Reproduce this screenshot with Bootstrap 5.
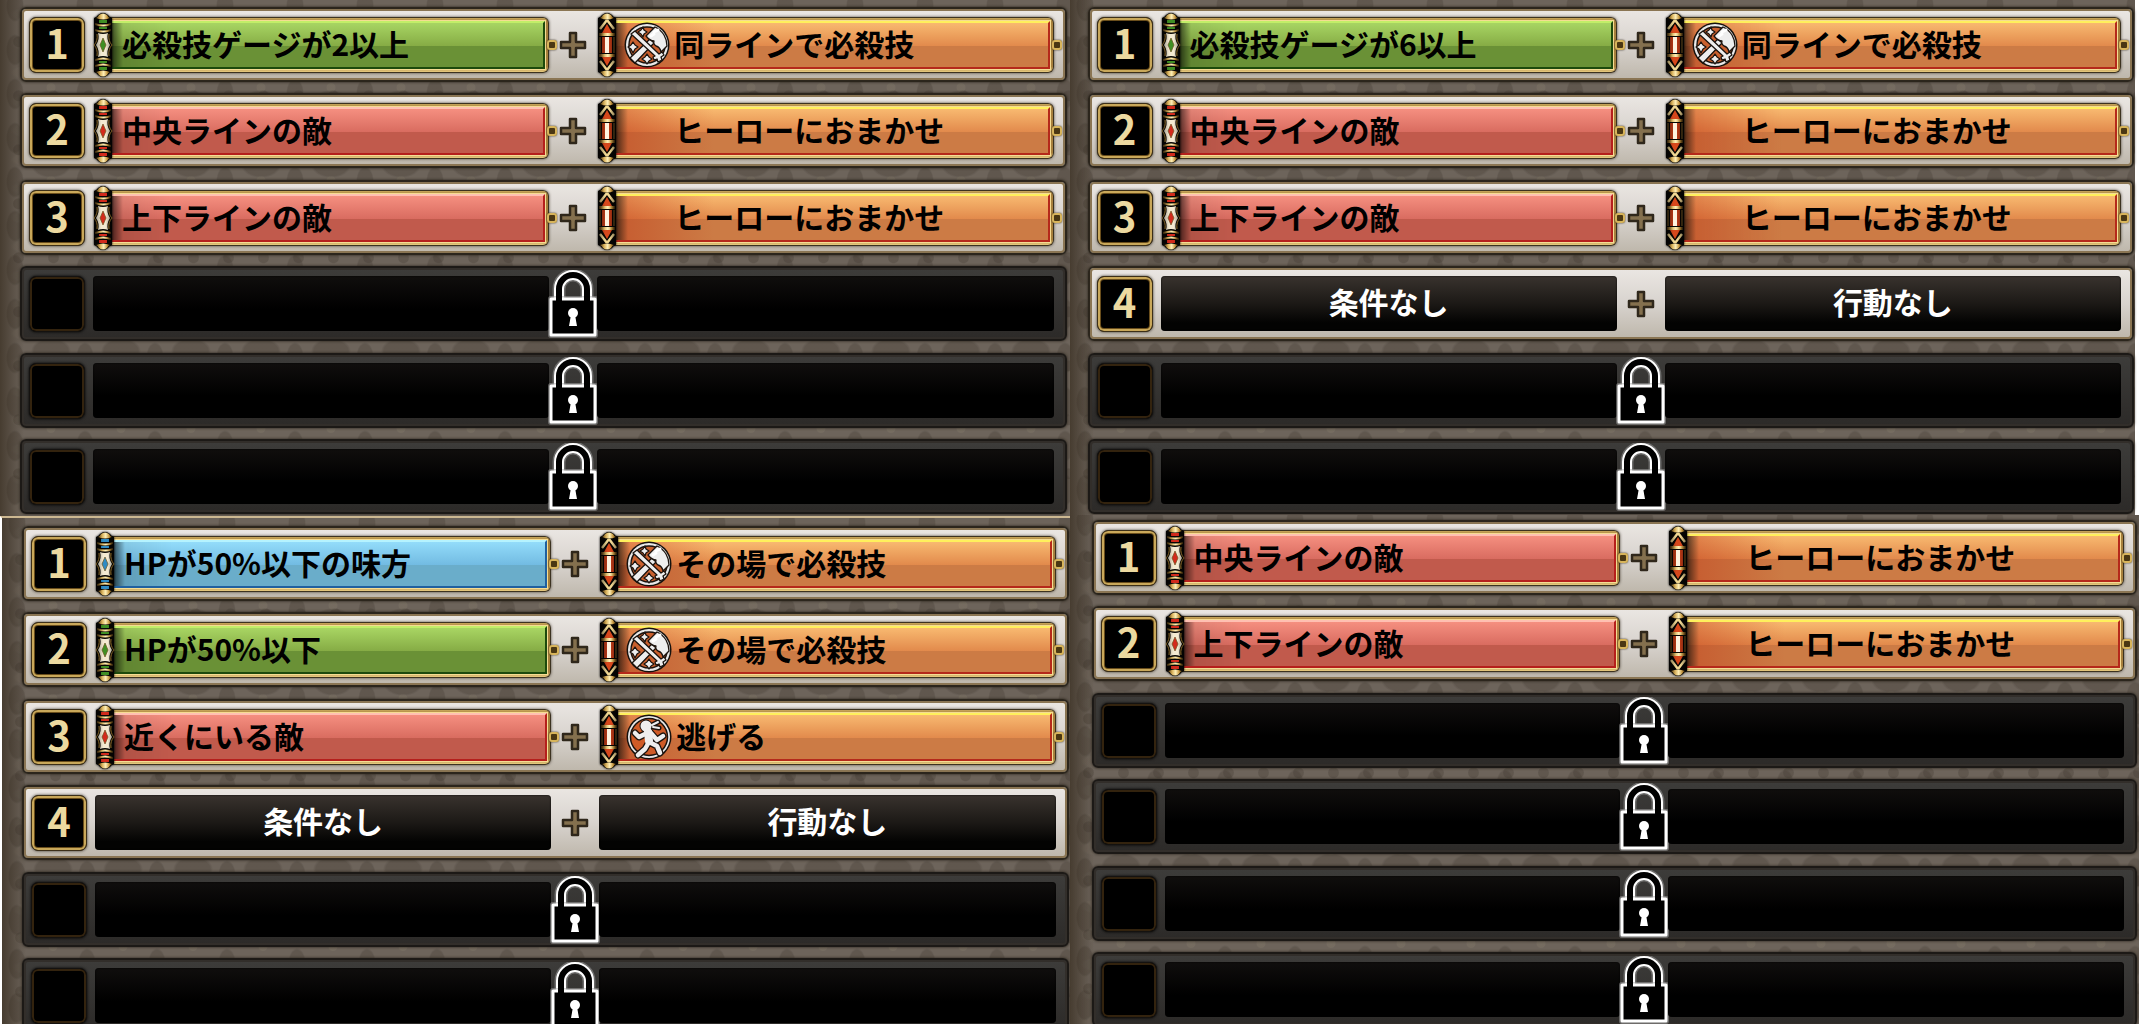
<!DOCTYPE html>
<html lang="ja">
<head>
<meta charset="utf-8">
<meta name="viewport" content="width=device-width, initial-scale=1">
<title>作戦リスト</title>
<link href="https://cdn.jsdelivr.net/npm/bootstrap@5.3.0/dist/css/bootstrap.min.css" rel="stylesheet">
<style>
body{background:#5c554b;font-family:"Noto Sans CJK JP","Noto Sans",sans-serif}
.plan{
  --tone:rgba(58,50,42,.26);
  background-color:#6d645b;
  background-image:
    linear-gradient(90deg,rgba(45,34,20,.6),rgba(45,34,20,0) 24px),
    radial-gradient(ellipse 20px 13px at 50% 50%,var(--tone) 85%,transparent),
    radial-gradient(ellipse 9px 16px at 50% 50%,var(--tone) 85%,transparent),
    radial-gradient(circle 5px at 50% 50%,rgba(140,130,112,.25) 80%,transparent),
    radial-gradient(circle 6px at 30% 70%,var(--tone) 80%,transparent),
    radial-gradient(ellipse 16px 7px at 50% 50%,rgba(128,118,106,.25) 80%,transparent);
  background-size:100% 100%,70px 62px,70px 44px,70px 31px,35px 54px,53px 29px;
  background-position:0 0,16px 10px,50px 28px,16px 10px,8px 4px,0 0;
}
.plan-a{padding:7px 3px 2px 20px}
.plan-b{padding:7px 1px 1px 18px;border-right:4px solid #fff}
.plan-c{padding:8px 1px 0 20px;border-left:2px solid #fff;border-top:2px solid #cdb891}
.plan-d{padding:5px 2px 0 22px}
.rule{height:75px;margin-bottom:11px;padding:0 11px 0 7px;border:2px solid #2b251c;border-radius:6px;
  background:linear-gradient(#ebe7e3,#d8d3ce 50%,#bdb6aa);box-shadow:inset 0 0 0 2px #8a7553,0 0 3px #241e16}
.rule:nth-child(2n){margin-bottom:12px}
.rule.shut{background:linear-gradient(#3d3c3a,#2c2a28);border-color:#1c1916;box-shadow:inset 0 0 0 2px #322e2a,0 0 3px #241e16}
.digit{width:56px;height:56px;margin-right:8px;border:1px solid #3c2f18;border-radius:7px;background:#000;color:#ecd9a0;
  box-shadow:inset 0 0 0 2px #c9a85a,inset 0 0 0 3px #6a4e1c,0 0 3px #3b362e;font-size:40px;line-height:48px;font-weight:700}
.shut .digit{border-color:#141210;box-shadow:inset 0 0 0 2px #33230e,0 0 3px #000}
.slot{flex:1 1 0;min-width:0;padding:0;border:0;background:none;font-size:30px;line-height:44px;font-weight:700;color:#000;white-space:nowrap}
.hollow{height:55px;padding-bottom:5px;border-radius:4px;background:linear-gradient(#39332e,#1c1916 50%,#030302 85%);color:#fff;box-shadow:inset 0 0 2px #000}
.shut .hollow{background:linear-gradient(#100e0d,#000 60%)}
.joint{width:48px}
.joint svg{flex:none}
.roll{width:20px;height:66px;flex:none;position:relative;z-index:1;filter:drop-shadow(0 0 1px #000)}
.bar{height:56px;margin-left:-3px;padding-left:12px;border:1px solid #3c3220;border-left:0;border-radius:0 6px 6px 0;
  background:linear-gradient(#c9a85c,#a7803c 6%,#a7803c 90%,#e9cc80);box-shadow:0 0 3px #4a4238;padding:3px 3px 3px 0}
.fill{height:48px;border:2px solid var(--edge);border-left:0;border-top-color:var(--shine);padding:0 0 4px 12px;
  background:linear-gradient(90deg,rgba(0,0,0,.7),rgba(0,0,0,.08) 13px,rgba(0,0,0,0) 60px),
  linear-gradient(var(--hi),var(--mid) 52%,var(--low) 53%,var(--low));outline:1px solid #f5dc93}
.green{--shine:#c2ee68;--hi:#a8d563;--mid:#86ac45;--low:#6a9136;--edge:#1d4a0c;--gem:#3f8f24}
.red{--shine:#ffc0b2;--hi:#f58f80;--mid:#d96c60;--low:#c15a4c;--edge:#b51f1c;--gem:#d32a1c}
.blue{--shine:#b5f3ff;--hi:#93dcfa;--mid:#72bbe2;--low:#6aadca;--edge:#20609f;--gem:#2f8bc4}
.orange{--shine:#fff05c;--hi:#f8b970;--mid:#e28a4c;--low:#cc7b45;--edge:#b5291a;--gem:#d6481c}
.orange .fill{background:linear-gradient(90deg,rgba(0,0,0,.75),rgba(190,50,20,.38) 14px,rgba(210,70,30,0) 100px),
  linear-gradient(var(--hi),var(--mid) 52%,var(--low) 53%,var(--low))}
.mark-box{width:46px;height:46px;flex:none;margin:4px 4px 0 -2px}
.ring{right:-8px;top:28px;width:10px;height:10px;border:2px solid #d7b45b;border-radius:3px;background:#4a3713;box-shadow:0 0 2px #2b2213}
</style>
<script src="https://cdn.jsdelivr.net/npm/bootstrap@5.3.0/dist/js/bootstrap.bundle.min.js"></script>
</head>
<body class="vh-100 overflow-hidden">

<svg width="0" height="0" class="position-absolute" aria-hidden="true">
  <defs>
    <linearGradient id="gold" x1="0" x2="1"><stop offset="0" stop-color="#4f350d"/><stop offset=".3" stop-color="#d9b25c"/><stop offset=".55" stop-color="#fff0b8"/><stop offset=".8" stop-color="#c3943c"/><stop offset="1" stop-color="#3c2708"/></linearGradient>
    <linearGradient id="shade" x1="0" x2="1"><stop offset="0" stop-opacity=".85"/><stop offset=".4" stop-opacity="0"/><stop offset=".65" stop-opacity="0"/><stop offset="1" stop-opacity=".85"/></linearGradient>
  </defs>
  <symbol id="rod" viewBox="0 0 20 66">
    <path d="M1 6Q4 5 5 3Q10-1 15 3Q16 5 19 6V60Q16 61 15 63Q10 67 5 63Q4 61 1 60Z" fill="#060503"/>
    <path d="M3 6Q5 5 6 3Q10 0 14 3Q15 5 17 6Q10 9 3 6ZM3 60Q5 61 6 63Q10 66 14 63Q15 61 17 60Q10 57 3 60Z" fill="url(#gold)"/>
    <path d="M6 8H14V11H6ZM6 15H14V17H6ZM6 49H14V51H6ZM6 55H14V58H6Z" fill="var(--gem)"/>
    <path d="M2 11Q10 14 18 11V13Q10 16 2 13ZM2 17Q10 20 18 17V19Q10 22 2 19ZM2 47Q10 44 18 47V49Q10 46 2 49ZM2 53Q10 50 18 53V55Q10 52 2 55Z" fill="url(#gold)"/>
    <path d="M5 21Q10 23 15 21Q13 27 17 33Q13 39 15 45Q10 43 5 45Q7 39 3 33Q7 27 5 21Z" fill="#f4ead2"/>
    <path d="M4 22Q5 29 1 33Q5 37 4 44M16 22Q15 29 19 33Q15 37 16 44" fill="none" stroke="#b98b35"/>
    <path d="M10 26L13 33L10 40L7 33Z" fill="var(--gem)" stroke="#6b5522" stroke-width=".7"/>
    <path d="M1 8H19V58H1Z" fill="url(#shade)" opacity=".5"/>
  </symbol>
  <symbol id="spear" viewBox="0 0 20 66">
    <path d="M1 6Q4 5 5 3Q10-1 15 3Q16 5 19 6V60Q16 61 15 63Q10 67 5 63Q4 61 1 60Z" fill="#060503"/>
    <path d="M3 6Q5 5 6 3Q10 0 14 3Q15 5 17 6Q10 9 3 6ZM3 60Q5 61 6 63Q10 66 14 63Q15 61 17 60Q10 57 3 60Z" fill="url(#gold)"/>
    <path d="M10 12L15 21H5ZM10 54L15 45H5Z" fill="#d6481c"/>
    <path d="M10 8L17 17M10 8L3 17M10 58L17 49M10 58L3 49" fill="none" stroke="#f1d893" stroke-width="2.5"/>
    <path d="M2 21H18V24H2ZM2 42H18V45H2Z" fill="url(#gold)"/>
    <path d="M5 25H15V41H5Z" fill="#b23715"/><path d="M8 25H12V41H8Z" fill="#fff3df"/>
    <path d="M3 25V41M17 25V41" stroke="#8f6b2a"/>
    <path d="M1 8H19V58H1Z" fill="url(#shade)" opacity=".6"/>
  </symbol>
  <symbol id="plus" viewBox="0 0 28 28">
    <path d="M11 2H17V11H26V17H17V26H11V17H2V11H11Z" fill="#84704e" stroke="#2f271b" stroke-width="2.5" stroke-linejoin="round"/>
  </symbol>
  <symbol id="lock" viewBox="0 0 50 68">
    <g fill="none" stroke-linejoin="round">
      <path d="M11 30V19a14 14 0 0 1 28 0V30" stroke="#aaa" stroke-opacity=".45" stroke-width="13"/>
      <path d="M11 30V19a14 14 0 0 1 28 0V30" stroke="#fff" stroke-width="10"/>
      <path d="M3 29H47V65H3Z" fill="#000" stroke="#aaa" stroke-opacity=".5" stroke-width="6"/>
      <path d="M3 29H47V65H3Z" fill="#000" stroke="#fff" stroke-width="3"/>
      <path d="M11 32V19a14 14 0 0 1 28 0V32" stroke="#000" stroke-width="6"/>
    </g>
    <circle cx="25" cy="43" r="5" fill="#fff"/><path d="M23 45H27L29 56H21Z" fill="#fff"/>
  </symbol>
  <symbol id="skill" viewBox="0 0 46 46">
    <circle cx="23" cy="23" r="22.5" fill="#17120e"/><circle cx="23" cy="23" r="21" fill="#e9e9e9"/><circle cx="23" cy="23" r="18" fill="#c9602e" stroke="#1b130e" stroke-width="1.5"/>
    <g fill="#eee" stroke="#1b130e" stroke-width="1.3" stroke-linejoin="round">
      <path d="M6 36L26 17L30 21L11 41Z"/>
      <path d="M7 12L11 9L35 32L38 30L40 33L37 35L38 38L34 40L33 37L30 38L29 35L31 34Z"/>
      <path d="M22 14L31 5Q36 7 40 13Q43 18 43 24L37 30Q36 25 32 24Q29 22 30 19Q26 19 22 14Z"/>
      <path d="M9 20L11 23L14 25L11 27L9 31L7 27L4 25L7 23Z"/>
      <path d="M19 5L20 8L23 10L20 12L19 15L17 12L14 10L17 8Z"/>
      <path d="M23 32L25 35L28 37L25 39L23 42L21 39L18 37L21 35Z"/>
    </g>
    <path d="M30 10L34 8M27 14L30 12" stroke="#fff" stroke-width="3" stroke-linecap="round"/>
  </symbol>
  <symbol id="flee" viewBox="0 0 46 46">
    <circle cx="23" cy="23" r="22.5" fill="#17120e"/><circle cx="23" cy="23" r="21" fill="#e9e9e9"/><circle cx="23" cy="23" r="18.5" fill="#cf5b27" stroke="#1b130e" stroke-width="1.5"/>
    <g fill="none" stroke-linecap="round" stroke-linejoin="round">
      <path d="M21 19L13 23L9 19M24 18L31 26L37 22M23 18L23 28L19 35L12 41M23 28L31 32L34 39" stroke="#1b130e" stroke-width="7"/>
      <circle cx="20" cy="12" r="6.5" fill="#1b130e"/>
      <path d="M21 19L13 23L9 19M24 18L31 26L37 22M23 28L19 35L12 41M23 28L31 32L34 39" stroke="#eee" stroke-width="4.5"/>
      <path d="M22 18L23 27" stroke="#eee" stroke-width="8"/>
      <path d="M26 11L32 8M27 13L33 14" stroke="#1b130e" stroke-width="5"/><path d="M26 11L32 8M27 13L33 14" stroke="#eee" stroke-width="2"/>
    </g>
    <circle cx="20" cy="12" r="5.5" fill="#eee"/>
  </symbol>
</svg>

<main class="row g-0">
  <div class="col-6 d-flex flex-column">
    <section class="plan plan-a"><ol class="list-unstyled m-0">
      <li class="rule d-flex align-items-center"><span class="digit text-center">1</span>
        <button type="button" class="slot green d-flex align-items-center position-relative"><svg class="roll"><use href="#rod"/></svg><span class="bar flex-grow-1"><span class="fill d-flex align-items-center">必殺技ゲージが2以上</span></span><i class="ring position-absolute"></i></button>
        <span class="joint d-flex justify-content-center"><svg width="28" height="28"><use href="#plus"/></svg></span>
        <button type="button" class="slot orange d-flex align-items-center position-relative"><svg class="roll"><use href="#spear"/></svg><span class="bar flex-grow-1"><span class="fill d-flex align-items-center"><svg class="mark-box"><use href="#skill"/></svg>同ラインで必殺技</span></span><i class="ring position-absolute"></i></button></li>
      <li class="rule d-flex align-items-center"><span class="digit text-center">2</span>
        <button type="button" class="slot red d-flex align-items-center position-relative"><svg class="roll"><use href="#rod"/></svg><span class="bar flex-grow-1"><span class="fill d-flex align-items-center">中央ラインの敵</span></span><i class="ring position-absolute"></i></button>
        <span class="joint d-flex justify-content-center"><svg width="28" height="28"><use href="#plus"/></svg></span>
        <button type="button" class="slot orange d-flex align-items-center position-relative"><svg class="roll"><use href="#spear"/></svg><span class="bar flex-grow-1"><span class="fill d-flex align-items-center"><span class="mark-box"></span>ヒーローにおまかせ</span></span><i class="ring position-absolute"></i></button></li>
      <li class="rule d-flex align-items-center"><span class="digit text-center">3</span>
        <button type="button" class="slot red d-flex align-items-center position-relative"><svg class="roll"><use href="#rod"/></svg><span class="bar flex-grow-1"><span class="fill d-flex align-items-center">上下ラインの敵</span></span><i class="ring position-absolute"></i></button>
        <span class="joint d-flex justify-content-center"><svg width="28" height="28"><use href="#plus"/></svg></span>
        <button type="button" class="slot orange d-flex align-items-center position-relative"><svg class="roll"><use href="#spear"/></svg><span class="bar flex-grow-1"><span class="fill d-flex align-items-center"><span class="mark-box"></span>ヒーローにおまかせ</span></span><i class="ring position-absolute"></i></button></li>
      <li class="rule shut d-flex align-items-center"><span class="digit"></span><span class="slot hollow"></span><span class="joint d-flex justify-content-center"><svg width="50" height="68"><use href="#lock"/></svg></span><span class="slot hollow"></span></li>
      <li class="rule shut d-flex align-items-center"><span class="digit"></span><span class="slot hollow"></span><span class="joint d-flex justify-content-center"><svg width="50" height="68"><use href="#lock"/></svg></span><span class="slot hollow"></span></li>
      <li class="rule shut d-flex align-items-center mb-0"><span class="digit"></span><span class="slot hollow"></span><span class="joint d-flex justify-content-center"><svg width="50" height="68"><use href="#lock"/></svg></span><span class="slot hollow"></span></li>
    </ol></section>

    <section class="plan plan-c"><ol class="list-unstyled m-0">
      <li class="rule d-flex align-items-center"><span class="digit text-center">1</span>
        <button type="button" class="slot blue d-flex align-items-center position-relative"><svg class="roll"><use href="#rod"/></svg><span class="bar flex-grow-1"><span class="fill d-flex align-items-center">HPが50%以下の味方</span></span><i class="ring position-absolute"></i></button>
        <span class="joint d-flex justify-content-center"><svg width="28" height="28"><use href="#plus"/></svg></span>
        <button type="button" class="slot orange d-flex align-items-center position-relative"><svg class="roll"><use href="#spear"/></svg><span class="bar flex-grow-1"><span class="fill d-flex align-items-center"><svg class="mark-box"><use href="#skill"/></svg>その場で必殺技</span></span><i class="ring position-absolute"></i></button></li>
      <li class="rule d-flex align-items-center"><span class="digit text-center">2</span>
        <button type="button" class="slot green d-flex align-items-center position-relative"><svg class="roll"><use href="#rod"/></svg><span class="bar flex-grow-1"><span class="fill d-flex align-items-center">HPが50%以下</span></span><i class="ring position-absolute"></i></button>
        <span class="joint d-flex justify-content-center"><svg width="28" height="28"><use href="#plus"/></svg></span>
        <button type="button" class="slot orange d-flex align-items-center position-relative"><svg class="roll"><use href="#spear"/></svg><span class="bar flex-grow-1"><span class="fill d-flex align-items-center"><svg class="mark-box"><use href="#skill"/></svg>その場で必殺技</span></span><i class="ring position-absolute"></i></button></li>
      <li class="rule d-flex align-items-center"><span class="digit text-center">3</span>
        <button type="button" class="slot red d-flex align-items-center position-relative"><svg class="roll"><use href="#rod"/></svg><span class="bar flex-grow-1"><span class="fill d-flex align-items-center">近くにいる敵</span></span><i class="ring position-absolute"></i></button>
        <span class="joint d-flex justify-content-center"><svg width="28" height="28"><use href="#plus"/></svg></span>
        <button type="button" class="slot orange d-flex align-items-center position-relative"><svg class="roll"><use href="#spear"/></svg><span class="bar flex-grow-1"><span class="fill d-flex align-items-center"><svg class="mark-box"><use href="#flee"/></svg>逃げる</span></span><i class="ring position-absolute"></i></button></li>
      <li class="rule d-flex align-items-center"><span class="digit text-center">4</span>
        <button type="button" class="slot hollow">条件なし</button>
        <span class="joint d-flex justify-content-center"><svg width="28" height="28"><use href="#plus"/></svg></span>
        <button type="button" class="slot hollow">行動なし</button></li>
      <li class="rule shut d-flex align-items-center"><span class="digit"></span><span class="slot hollow"></span><span class="joint d-flex justify-content-center"><svg width="50" height="68"><use href="#lock"/></svg></span><span class="slot hollow"></span></li>
      <li class="rule shut d-flex align-items-center"><span class="digit"></span><span class="slot hollow"></span><span class="joint d-flex justify-content-center"><svg width="50" height="68"><use href="#lock"/></svg></span><span class="slot hollow"></span></li>
    </ol></section>
  </div>

  <div class="col-6 d-flex flex-column">
    <section class="plan plan-b"><ol class="list-unstyled m-0">
      <li class="rule d-flex align-items-center"><span class="digit text-center">1</span>
        <button type="button" class="slot green d-flex align-items-center position-relative"><svg class="roll"><use href="#rod"/></svg><span class="bar flex-grow-1"><span class="fill d-flex align-items-center">必殺技ゲージが6以上</span></span><i class="ring position-absolute"></i></button>
        <span class="joint d-flex justify-content-center"><svg width="28" height="28"><use href="#plus"/></svg></span>
        <button type="button" class="slot orange d-flex align-items-center position-relative"><svg class="roll"><use href="#spear"/></svg><span class="bar flex-grow-1"><span class="fill d-flex align-items-center"><svg class="mark-box"><use href="#skill"/></svg>同ラインで必殺技</span></span><i class="ring position-absolute"></i></button></li>
      <li class="rule d-flex align-items-center"><span class="digit text-center">2</span>
        <button type="button" class="slot red d-flex align-items-center position-relative"><svg class="roll"><use href="#rod"/></svg><span class="bar flex-grow-1"><span class="fill d-flex align-items-center">中央ラインの敵</span></span><i class="ring position-absolute"></i></button>
        <span class="joint d-flex justify-content-center"><svg width="28" height="28"><use href="#plus"/></svg></span>
        <button type="button" class="slot orange d-flex align-items-center position-relative"><svg class="roll"><use href="#spear"/></svg><span class="bar flex-grow-1"><span class="fill d-flex align-items-center"><span class="mark-box"></span>ヒーローにおまかせ</span></span><i class="ring position-absolute"></i></button></li>
      <li class="rule d-flex align-items-center"><span class="digit text-center">3</span>
        <button type="button" class="slot red d-flex align-items-center position-relative"><svg class="roll"><use href="#rod"/></svg><span class="bar flex-grow-1"><span class="fill d-flex align-items-center">上下ラインの敵</span></span><i class="ring position-absolute"></i></button>
        <span class="joint d-flex justify-content-center"><svg width="28" height="28"><use href="#plus"/></svg></span>
        <button type="button" class="slot orange d-flex align-items-center position-relative"><svg class="roll"><use href="#spear"/></svg><span class="bar flex-grow-1"><span class="fill d-flex align-items-center"><span class="mark-box"></span>ヒーローにおまかせ</span></span><i class="ring position-absolute"></i></button></li>
      <li class="rule d-flex align-items-center"><span class="digit text-center">4</span>
        <button type="button" class="slot hollow">条件なし</button>
        <span class="joint d-flex justify-content-center"><svg width="28" height="28"><use href="#plus"/></svg></span>
        <button type="button" class="slot hollow">行動なし</button></li>
      <li class="rule shut d-flex align-items-center"><span class="digit"></span><span class="slot hollow"></span><span class="joint d-flex justify-content-center"><svg width="50" height="68"><use href="#lock"/></svg></span><span class="slot hollow"></span></li>
      <li class="rule shut d-flex align-items-center mb-0"><span class="digit"></span><span class="slot hollow"></span><span class="joint d-flex justify-content-center"><svg width="50" height="68"><use href="#lock"/></svg></span><span class="slot hollow"></span></li>
    </ol></section>

    <section class="plan plan-d flex-grow-1"><ol class="list-unstyled m-0">
      <li class="rule d-flex align-items-center"><span class="digit text-center">1</span>
        <button type="button" class="slot red d-flex align-items-center position-relative"><svg class="roll"><use href="#rod"/></svg><span class="bar flex-grow-1"><span class="fill d-flex align-items-center">中央ラインの敵</span></span><i class="ring position-absolute"></i></button>
        <span class="joint d-flex justify-content-center"><svg width="28" height="28"><use href="#plus"/></svg></span>
        <button type="button" class="slot orange d-flex align-items-center position-relative"><svg class="roll"><use href="#spear"/></svg><span class="bar flex-grow-1"><span class="fill d-flex align-items-center"><span class="mark-box"></span>ヒーローにおまかせ</span></span><i class="ring position-absolute"></i></button></li>
      <li class="rule d-flex align-items-center"><span class="digit text-center">2</span>
        <button type="button" class="slot red d-flex align-items-center position-relative"><svg class="roll"><use href="#rod"/></svg><span class="bar flex-grow-1"><span class="fill d-flex align-items-center">上下ラインの敵</span></span><i class="ring position-absolute"></i></button>
        <span class="joint d-flex justify-content-center"><svg width="28" height="28"><use href="#plus"/></svg></span>
        <button type="button" class="slot orange d-flex align-items-center position-relative"><svg class="roll"><use href="#spear"/></svg><span class="bar flex-grow-1"><span class="fill d-flex align-items-center"><span class="mark-box"></span>ヒーローにおまかせ</span></span><i class="ring position-absolute"></i></button></li>
      <li class="rule shut d-flex align-items-center"><span class="digit"></span><span class="slot hollow"></span><span class="joint d-flex justify-content-center"><svg width="50" height="68"><use href="#lock"/></svg></span><span class="slot hollow"></span></li>
      <li class="rule shut d-flex align-items-center"><span class="digit"></span><span class="slot hollow"></span><span class="joint d-flex justify-content-center"><svg width="50" height="68"><use href="#lock"/></svg></span><span class="slot hollow"></span></li>
      <li class="rule shut d-flex align-items-center"><span class="digit"></span><span class="slot hollow"></span><span class="joint d-flex justify-content-center"><svg width="50" height="68"><use href="#lock"/></svg></span><span class="slot hollow"></span></li>
      <li class="rule shut d-flex align-items-center"><span class="digit"></span><span class="slot hollow"></span><span class="joint d-flex justify-content-center"><svg width="50" height="68"><use href="#lock"/></svg></span><span class="slot hollow"></span></li>
    </ol></section>
  </div>
</main>
</body>
</html>
